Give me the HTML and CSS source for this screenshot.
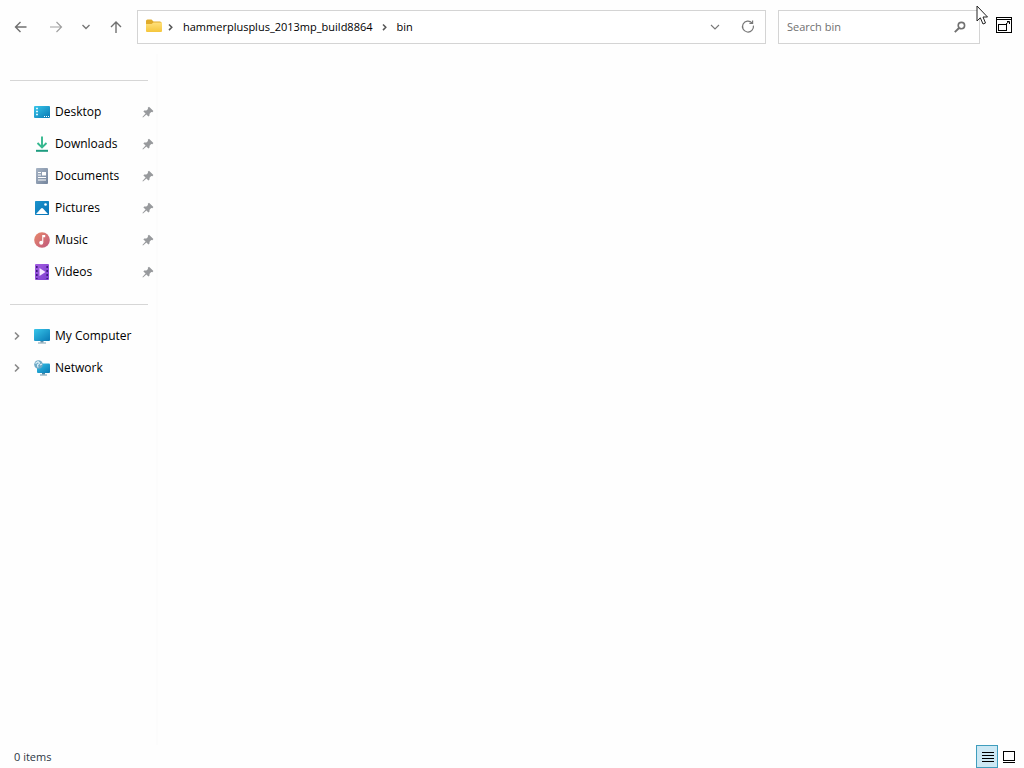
FILE: index.html
```html
<!DOCTYPE html>
<html lang="en">
<head>
	<meta charset="UTF-8">
	<meta name="viewport" content="width=device-width, initial-scale=1.0">
	<title>bin</title>
	<link rel="stylesheet" href="styles.css">
</head>
<body>
	<svg width="0" height="0" class="defs" aria-hidden="true">
		<defs>
			<linearGradient id="blue" x1="0" y1="0" x2="1" y2="1">
				<stop offset="0" stop-color="#38c6ea"/>
				<stop offset="1" stop-color="#0878b4"/>
			</linearGradient>
			<linearGradient id="yellow" x1="0" y1="0" x2="0" y2="1">
				<stop offset="0" stop-color="#ffe07a"/>
				<stop offset="1" stop-color="#f5c63c"/>
			</linearGradient>
			<linearGradient id="slate" x1="0" y1="0" x2="1" y2="1">
				<stop offset="0" stop-color="#a7b4c5"/>
				<stop offset="1" stop-color="#74849c"/>
			</linearGradient>
			<linearGradient id="coral" x1="0" y1="0" x2="1" y2="1">
				<stop offset="0" stop-color="#e8896a"/>
				<stop offset="1" stop-color="#c0587e"/>
			</linearGradient>
			<linearGradient id="purple" x1="0" y1="0" x2="1" y2="1">
				<stop offset="0" stop-color="#a35ce0"/>
				<stop offset="1" stop-color="#7c3fd0"/>
			</linearGradient>
			<symbol id="pin" viewBox="0 0 12 12">
				<path d="M7 .8 L11.4 5 L10.4 6.2 L9.2 6 L7.6 7.8 L7.4 9.8 L6.4 10.6 L4.4 8.4 L1 11.6 L.4 11 L3.6 7.6 L1.4 5.6 L2.2 4.6 L4.4 4.4 L6 3 L5.8 1.8 Z" fill="#989a9d"/>
			</symbol>
			<symbol id="chevron" viewBox="0 0 8 10">
				<path d="M2 1.5 L5.5 5 L2 8.5" fill="none" stroke="currentColor" stroke-width="1.6"/>
			</symbol>
			<symbol id="crumb_chevron" viewBox="0 0 8 10">
				<path d="M2 2.5 L4.8 5.3 L2 8.1" fill="none" stroke="currentColor" stroke-width="1.5"/>
			</symbol>
		</defs>
	</svg>

	<header class="toolbar">
		<nav class="history">
			<button class="back" aria-label="Back">
				<svg width="14" height="12" viewBox="0 0 14 12"><path d="M12.5 6 H1.5 M6.5 1 L1.5 6 L6.5 11" fill="none" stroke="#707070" stroke-width="1.4"/></svg>
			</button>
			<button class="forward" aria-label="Forward">
				<svg width="14" height="12" viewBox="0 0 14 12"><path d="M1 6 H12.5 M7.5 1 L12.5 6 L7.5 11" fill="none" stroke="#a0a0a0" stroke-width="1.2"/></svg>
			</button>
			<button class="recent" aria-label="Recent locations">
				<svg width="10" height="6" viewBox="0 0 10 6"><path d="M1.5 1 L5 4.5 L8.5 1" fill="none" stroke="#777" stroke-width="1.4"/></svg>
			</button>
			<button class="up" aria-label="Up">
				<svg width="12" height="14" viewBox="0 0 12 14"><path d="M6 13 V2 M1 7 L6 2 L11 7" fill="none" stroke="#707070" stroke-width="1.4"/></svg>
			</button>
		</nav>

		<div class="address">
			<svg class="folder" width="18" height="16" viewBox="0 0 18 16">
				<path d="M1 2 Q1 .5 2.5 .5 H6.5 L8.5 2.5 H15 Q16.5 2.5 16.5 4 V7 H1 Z" fill="#e0ab2b"/>
				<path d="M1 5 H6.5 L8.5 3.5 H17 V12 Q17 13 16 13 H2 Q1 13 1 12 Z" fill="url(#yellow)"/>
			</svg>
			<svg class="crumb_arrow" width="8" height="10"><use href="#crumb_chevron"/></svg>
			<a class="crumb" href="#">hammerplusplus_2013mp_build8864</a>
			<svg class="crumb_arrow" width="8" height="10"><use href="#crumb_chevron"/></svg>
			<a class="crumb" href="#">bin</a>
			<div class="address_buttons">
				<button aria-label="Previous locations">
					<svg width="10" height="6" viewBox="0 0 10 6"><path d="M1 1 L5 5 L9 1" fill="none" stroke="#777" stroke-width="1.1"/></svg>
				</button>
				<button aria-label="Refresh">
					<svg width="14" height="14" viewBox="0 0 14 14">
						<path d="M11 2.8 A5.5 5.5 0 1 0 12.4 5.6" fill="none" stroke="#777" stroke-width="1.2"/>
						<path d="M11.6 .4 V3.4 H8.4" fill="none" stroke="#777" stroke-width="1.2"/>
					</svg>
				</button>
			</div>
		</div>

		<form class="search">
			<input type="text" placeholder="Search bin" aria-label="Search bin">
			<button type="button" aria-label="Search">
				<svg width="12" height="12" viewBox="0 0 12 12">
					<circle cx="7.4" cy="4.6" r="3.2" fill="none" stroke="#707070" stroke-width="1.6"/>
					<path d="M5 7 L.8 11.2" stroke="#707070" stroke-width="1.9"/>
				</svg>
			</button>
		</form>

		<button class="fullscreen" aria-label="Full screen">
			<svg width="16" height="16" viewBox="0 0 16 16" shape-rendering="crispEdges">
				<path d="M.5 .5 H15.5 V15.5 H.5 Z M0 2.5 H16" fill="none" stroke="#000"/>
				<path d="M2.5 7.5 H10.5 V13.5 H2.5 Z" fill="none" stroke="#000"/>
				<path d="M10 7 L13 4.5 M11 4.5 H13.5 V7" fill="none" stroke="#000" shape-rendering="auto"/>
			</svg>
		</button>
	</header>

	<main class="content">
		<aside class="sidebar">
			<hr>
			<ul>
				<li>
					<a href="#">
						<svg width="16" height="16" viewBox="0 0 16 16">
							<rect x="0" y="2" width="16" height="12" rx="1" fill="url(#blue)"/>
							<path d="M2 4.5 H4 M2 7.5 H4 M2 10.5 H4" stroke="#d9f6ff" stroke-width="1.4"/>
							<path d="M10 12.5 H15" stroke="#fff" stroke-dasharray="1 1"/>
						</svg>
						Desktop
					</a>
					<svg class="pin" width="12" height="12"><use href="#pin"/></svg>
				</li>
				<li>
					<a href="#">
						<svg width="16" height="16" viewBox="0 0 16 16">
							<path d="M8 .5 V11.5 M3.5 7 L8 11.5 L12.5 7" fill="none" stroke="#35b88f" stroke-width="1.9"/>
							<path d="M2 14.8 H14" stroke="#1e9c80" stroke-width="2"/>
						</svg>
						Downloads
					</a>
					<svg class="pin" width="12" height="12"><use href="#pin"/></svg>
				</li>
				<li>
					<a href="#">
						<svg width="16" height="16" viewBox="0 0 16 16">
							<rect x="2" y="0" width="12" height="16" rx="1" fill="url(#slate)"/>
							<path d="M4 4.5 H7 M4 7 H7 M4 9.5 H12 M4 12 H12" stroke="#fff" stroke-width="1.2"/>
							<rect x="8" y="4" width="4" height="3.5" fill="#fff"/>
						</svg>
						Documents
					</a>
					<svg class="pin" width="12" height="12"><use href="#pin"/></svg>
				</li>
				<li>
					<a href="#">
						<svg width="16" height="16" viewBox="0 0 16 16">
							<rect x="1" y="1" width="14" height="14" rx="1" fill="url(#blue)"/>
							<rect x="1" y="1" width="14" height="14" rx="1" fill="#0870b8" opacity=".6"/>
							<path d="M2 14 L7 8.4 Q8 7.5 9 8.4 L14 14 Z" fill="#fff"/>
							<circle cx="11.5" cy="4.5" r="1.3" fill="#fff"/>
						</svg>
						Pictures
					</a>
					<svg class="pin" width="12" height="12"><use href="#pin"/></svg>
				</li>
				<li>
					<a href="#">
						<svg width="16" height="16" viewBox="0 0 16 16">
							<circle cx="8" cy="8" r="7.8" fill="url(#coral)"/>
							<path d="M8.2 3 H11.2 V5.2 H9.3 V10.5 H8.2 Z" fill="#fff"/>
							<circle cx="7.2" cy="10.7" r="2" fill="#fff"/>
						</svg>
						Music
					</a>
					<svg class="pin" width="12" height="12"><use href="#pin"/></svg>
				</li>
				<li>
					<a href="#">
						<svg width="16" height="16" viewBox="0 0 16 16">
							<rect x="1" y="0" width="14" height="16" rx="1" fill="url(#purple)"/>
							<path d="M2.8 2 V15 M13.2 2 V15" stroke="#3b1a7c" stroke-width="1.6" stroke-dasharray="2 2"/>
							<path d="M5.5 4 L11.5 8 L5.5 12 Z" fill="#f3e6ff"/>
						</svg>
						Videos
					</a>
					<svg class="pin" width="12" height="12"><use href="#pin"/></svg>
				</li>
			</ul>
			<hr>
			<ul>
				<li>
					<button class="expand" aria-label="Expand My Computer"><svg width="8" height="10"><use href="#chevron"/></svg></button>
					<a href="#">
						<svg width="16" height="16" viewBox="0 0 16 16">
							<rect x="0" y="1" width="16" height="12" rx="1" fill="url(#blue)"/>
							<path d="M6.5 13 H9.5 V14.5 H6.5 Z" fill="#5f8da5"/>
							<path d="M4 15 H12" stroke="#7f9fb0"/>
						</svg>
						My Computer
					</a>
				</li>
				<li>
					<button class="expand" aria-label="Expand Network"><svg width="8" height="10"><use href="#chevron"/></svg></button>
					<a href="#">
						<svg width="16" height="16" viewBox="0 0 16 16">
							<rect x="3" y="3.5" width="13" height="9.5" rx="1" fill="url(#blue)"/>
							<path d="M8 13 H11 V14.5 H8 Z" fill="#4b88a5"/>
							<path d="M6 15 H13" stroke="#6b98ae"/>
							<circle cx="4.5" cy="4.5" r="4.3" fill="#6ea9c6"/>
							<path d="M1.5 3.5 L4 1.5 L5.5 3 L3.5 5 L4 7.5 M6 5 L8 4" fill="none" stroke="#e0f1f8" stroke-width="1.2"/>
						</svg>
						Network
					</a>
				</li>
			</ul>
		</aside>
		<section class="files" aria-label="Files"></section>
	</main>

	<footer class="statusbar">
		<p>0 items</p>
		<div class="views">
			<button class="active" aria-label="Details view">
				<svg width="13" height="12" viewBox="0 0 13 12" shape-rendering="crispEdges"><path d="M1 1.5 H13 M1 4.5 H13 M1 7.5 H13 M1 10.5 H13" stroke="#000"/></svg>
			</button>
			<button aria-label="Large icons view">
				<svg width="12" height="12" viewBox="0 0 12 12" shape-rendering="crispEdges"><path d="M.5 .5 H11.5 V9.5 H.5 Z M0 11.5 H12" fill="none" stroke="#000"/></svg>
			</button>
		</div>
	</footer>

	<svg class="cursor" width="13" height="21" viewBox="0 0 13 21" aria-hidden="true">
		<path d="M1 1 V16 L4.3 12.8 L7 19 L9.5 18 L7 12 H11.5 Z" fill="#fff" stroke="#222"/>
	</svg>
</body>
</html>
```

FILE: styles.css
```css
* {
	margin: 0;
	padding: 0;
	box-sizing: border-box;
}
html, body {
	height: 100%;
}
body {
	display: flex;
	flex-direction: column;
	background: #fefefe;
	color: #000;
	font-family: "Segoe UI", "Open Sans", "Noto Sans", sans-serif;
	font-size: 12px;
	line-height: 16px;
}
a {
	color: inherit;
	text-decoration: none;
}
ul {
	list-style: none;
}
svg {
	display: block;
	flex-shrink: 0;
}
button {
	display: flex;
	justify-content: center;
	align-items: center;
	background: none;
	border: 0;
	color: inherit;
}
.defs {
	position: absolute;
}

.toolbar, .statusbar {
	font-size: 11px;
}
.toolbar {
	display: flex;
	align-items: center;
	padding: 10px 12px 10px 3px;
}
.history {
	display: flex;
	margin-right: 4px;
}
.history button {
	height: 32px;
}
.back {
	width: 36px;
}
.forward, .up {
	width: 34px;
}
.recent {
	width: 26px;
}

.address, .search {
	display: flex;
	align-items: center;
	height: 34px;
	background: #fff;
	border: 1px solid #d4d4d4;
}
.address {
	flex: 1;
	margin-right: 12px;
	padding: 0 8px 0 7px;
}
.folder {
	margin-right: 4px;
}
.crumb_arrow {
	color: #555;
	margin-right: 8px;
}
.crumb {
	margin-right: 8px;
}
.address_buttons {
	display: flex;
	gap: 14px;
	margin-left: auto;
}
.address_buttons button {
	width: 19px;
	height: 24px;
}

.search {
	width: 202px;
	margin-right: 16px;
	padding: 0 13px 0 8px;
}
.search input {
	flex: 1;
	min-width: 0;
	background: none;
	border: 0;
	outline: 0;
	font: inherit;
}
.search input::placeholder {
	color: #707070;
	opacity: 1;
}
.fullscreen {
	padding-bottom: 4px;
}

.content {
	flex: 1;
	display: flex;
	min-height: 0;
}
.sidebar {
	width: 158px;
	padding-top: 10px;
	border-right: 2px solid #fcfcfc;
}
.sidebar hr {
	margin: 16px 8px 15px 10px;
	border: 0;
	border-top: 1px solid #d6d6d6;
}
.sidebar li {
	display: flex;
	align-items: center;
	height: 32px;
	padding: 0 2px 0 10px;
}
.sidebar a {
	flex: 1;
	display: flex;
	align-items: center;
	gap: 5px;
	margin-left: 24px;
}
.expand {
	width: 14px;
	height: 20px;
	color: #888;
}
.expand + a {
	margin-left: 10px;
}
.files {
	flex: 1;
}

.statusbar {
	display: flex;
	justify-content: space-between;
	align-items: center;
	padding: 0 4px 0 14px;
	color: #2c3644;
}
.views {
	display: flex;
}
.views button {
	width: 22px;
	height: 23px;
	border: 1px solid transparent;
}
.views .active {
	background: #cce8f4;
	border-color: #3f9dbd;
}

.cursor {
	position: absolute;
	top: 5px;
	right: 35px;
}
```
